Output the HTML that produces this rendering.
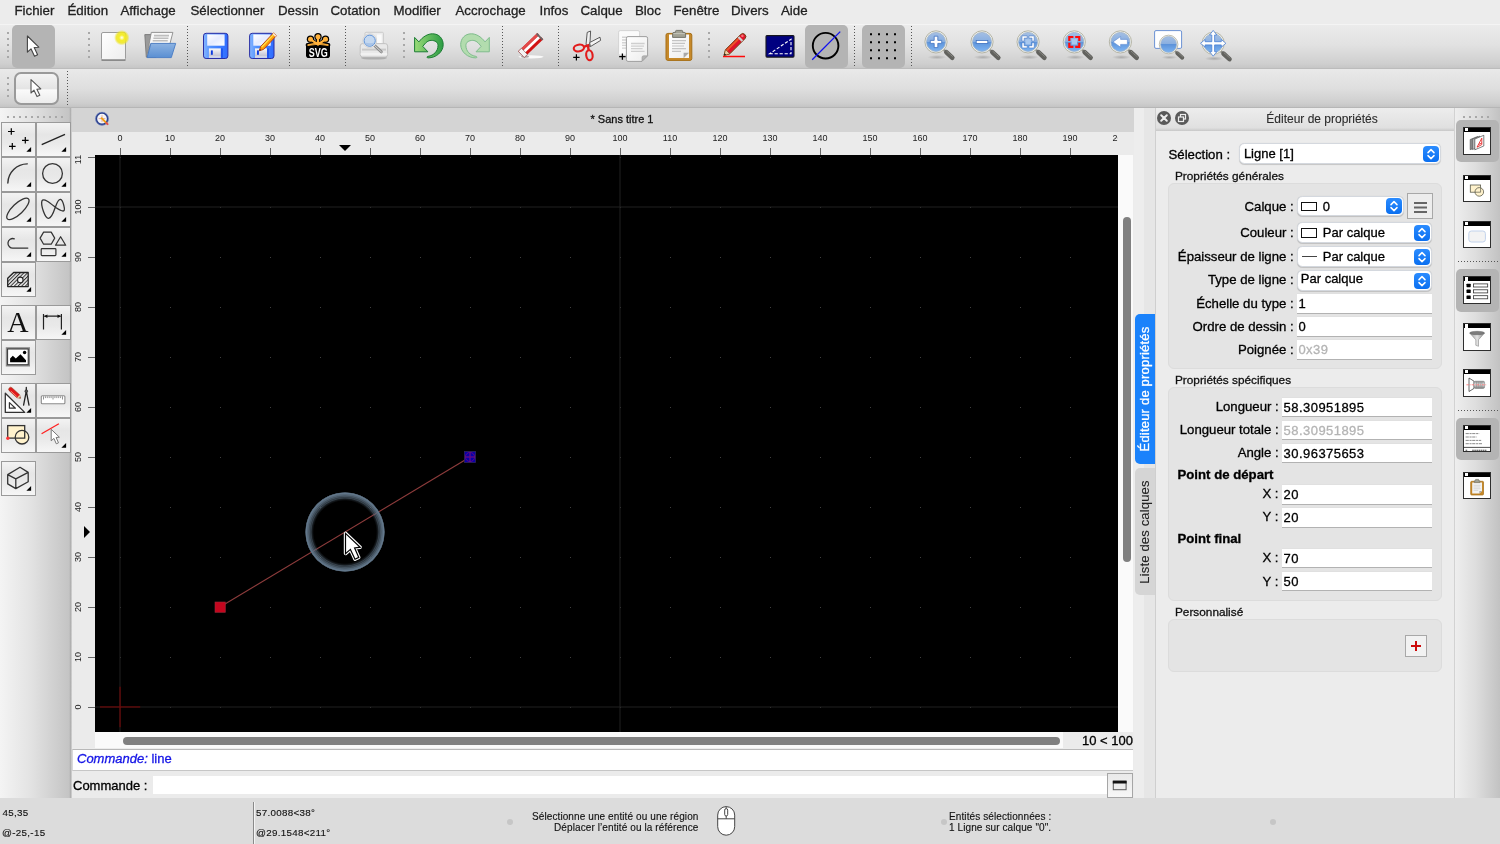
<!DOCTYPE html>
<html lang="fr">
<head>
<meta charset="utf-8">
<title>Sans titre 1</title>
<style>
*{box-sizing:border-box;margin:0;padding:0}
html,body{width:1500px;height:844px;overflow:hidden;background:#ececec}
body{position:relative;font-family:"Liberation Sans",sans-serif;font-size:13px;color:#1a1a1a;-webkit-font-smoothing:antialiased;-webkit-text-stroke:.3px}
.abs{position:absolute}
#app{position:absolute;left:0;top:0;width:1500px;height:844px;will-change:transform;overflow:hidden}
#menubar{position:absolute;left:0;top:0;width:1500px;height:24px;background:#ececec}
#menubar span{position:absolute;top:3px;font-size:13.3px;line-height:16px;color:#222;white-space:nowrap}
#tb1{position:absolute;left:0;top:24px;width:1500px;height:45px;background:linear-gradient(#ebebeb,#e2e2e2 45%,#cfcfcf 90%,#c6c6c6);border-top:1px solid #f4f4f4;border-bottom:1px solid #bcbcbc}
#tb2{position:absolute;left:0;top:69px;width:1500px;height:39px;background:linear-gradient(#e9e9e9,#dfdfdf 50%,#cecece 90%,#c4c4c4);border-bottom:1px solid #b6b6b6}
.hdl{position:absolute;width:2px;height:26px;background:repeating-linear-gradient(#a8a8a8 0 2px,transparent 2px 6px)}
.vsep{position:absolute;width:1px;height:42px;background:repeating-linear-gradient(#555 0 1px,transparent 1px 3px)}
.sel{position:absolute;background:#b4b4b4;border-radius:5px}
#leftp{position:absolute;left:0;top:108px;width:72px;height:690px;background:linear-gradient(90deg,#f4f4f4,#e4e4e4 40%,#c4c4c4 96%,#b0b0b0 98%,#d8d8d8)}
.tbn{position:absolute;width:35px;height:35px;border:1px solid #9a9a9a;background:linear-gradient(#f3f3f3,#e6e6e6 35%,#e9e9e9 60%,#f6f6f6)}
.tbn svg{position:absolute;left:-1px;top:-1px}
#tabbar{position:absolute;left:72px;top:108px;width:1062px;height:24px;background:#d4d4d4}
#hruler{position:absolute;left:72px;top:132px;width:1062px;height:23px;background:#ebebeb;overflow:hidden}
#vruler{position:absolute;left:72px;top:155px;width:23px;height:593px;background:#ebebeb;overflow:hidden}
#hruler span{position:absolute;top:1px;-webkit-text-stroke:0;font-size:9px;line-height:10px;width:30px;margin-left:-15px;text-align:center;color:#222}
#hruler i{position:absolute;top:16px;width:1px;height:7px;background:#666}
#vruler span{position:absolute;left:-8.800px;-webkit-text-stroke:0;font-size:9px;line-height:10px;width:30px;height:10px;margin-top:-5px;text-align:center;color:#222;transform:rotate(-90deg)}
#vruler i{position:absolute;left:16px;width:7px;height:1px;background:#666}
#canvas{position:absolute;left:95px;top:155px;width:1023px;height:577px;background:#000;overflow:hidden}
#vscroll{position:absolute;left:1118px;top:155px;width:15px;height:577px;background:#fafafa}
#hscroll{position:absolute;left:95px;top:732px;width:1038px;height:16px;background:#fafafa}
.thumb{position:absolute;background:#808080;border-radius:4px}
#hist{position:absolute;left:72px;top:748.6px;width:1061.3px;height:22.4px;background:#fff;border-top:1px solid #b8b8b8;border-bottom:1px solid #c6c6c6;border-left:1px solid #d8d8d8}
#cmdrow{position:absolute;left:72px;top:771px;width:1062px;height:27px;background:#ebebeb}
#status{position:absolute;left:0;top:798px;width:1500px;height:46px;background:#dcdcdc}
#status span{position:absolute;font-size:10px;line-height:11px;letter-spacing:.1px;-webkit-text-stroke:.12px;color:#111;white-space:nowrap}
#status span.co{font-size:9.8px;letter-spacing:.3px}
#dockstrip{position:absolute;left:1134px;top:108px;width:21px;height:690px;background:linear-gradient(90deg,#ededed 0 10px,#e6e6e6 10px)}
#prop{position:absolute;left:1155px;top:108px;width:300px;height:690px;background:#ececec;border-left:1px solid #cfcfcf;border-right:1px solid #d2d2d2}
#righttb{position:absolute;left:1455px;top:108px;width:45px;height:690px;background:linear-gradient(90deg,#eeeeee,#dedede 45%,#c2c2c2)}
.gb{position:absolute;left:1168px;width:274px;background:#e4e4e4;border:1px solid #dcdcdc;border-radius:6px}
.lbl{position:absolute;font-size:13.2px;line-height:16px;white-space:nowrap;color:#000}
.rl{text-align:right}
.inp{position:absolute;height:19.5px;background:#fff;border-bottom:1px solid #b2b2b2;box-shadow:0 -.5px 0 #dcdcdc;font-size:13px;line-height:18.5px;padding:1px 0 0 1.6px;letter-spacing:.45px;color:#000;white-space:nowrap}
.inp.dis{color:#b4b4b4}
.cmb{position:absolute;height:20.5px;background:#fff;border:1px solid #d4d8de;border-radius:5.5px;box-shadow:0 .5px .8px rgba(0,0,0,.16);font-size:13px;line-height:20px;color:#000;white-space:nowrap}
.cmb b{position:absolute;right:1.5px;top:1.5px;width:16px;height:16px;border-radius:4px;background:linear-gradient(#2b8cff,#0a6ff0)}
.cmb b svg{position:absolute;left:0;top:0}
.gt{position:absolute;left:1175px;font-size:11.8px;line-height:13px;color:#111;white-space:nowrap}
.dico{position:absolute;left:1463px;width:27.6px;height:27.4px;background:#fff;border:1px solid #2e2e2e}
.dico:before{content:"";position:absolute;left:0;top:0;width:25.6px;height:4px;background:#000}
.dico:after{content:"";position:absolute;left:.5px;top:0;width:3.3px;height:3.3px;background:#fff}
.hsep{position:absolute;left:1458px;width:42px;height:1px;background:repeating-linear-gradient(90deg,#555 0 1px,transparent 1px 3px)}
</style>
</head>
<body>
<div id="app">
<div id="menubar">
<span style="left:14.5px">Fichier</span>
<span style="left:67.5px">Édition</span>
<span style="left:120.5px">Affichage</span>
<span style="left:190.5px">Sélectionner</span>
<span style="left:278px">Dessin</span>
<span style="left:330.5px">Cotation</span>
<span style="left:393.5px">Modifier</span>
<span style="left:455.5px">Accrochage</span>
<span style="left:539.5px">Infos</span>
<span style="left:580.5px">Calque</span>
<span style="left:635px">Bloc</span>
<span style="left:673.5px">Fenêtre</span>
<span style="left:731px">Divers</span>
<span style="left:781px">Aide</span>
</div>
<div id="tb1">
<div class="hdl" style="left:7px;top:7px"></div>
<div class="sel" style="left:12px;top:0;width:43px;height:43px"></div>
<div class="hdl" style="left:88px;top:7px"></div>
<div class="vsep" style="left:187px;top:1px"></div>
<div class="vsep" style="left:289px;top:1px"></div>
<div class="vsep" style="left:345px;top:1px"></div>
<div class="hdl" style="left:403px;top:7px"></div>
<div class="vsep" style="left:502px;top:1px"></div>
<div class="vsep" style="left:558px;top:1px"></div>
<div class="hdl" style="left:708px;top:7px"></div>
<div class="sel" style="left:805px;top:0;width:43px;height:43px"></div>
<div class="vsep" style="left:854px;top:1px"></div>
<div class="sel" style="left:862px;top:0;width:43px;height:43px"></div>
<div class="vsep" style="left:911px;top:1px"></div>

</div>
<div id="tb2">
<div class="hdl" style="left:7px;top:8px;height:20px"></div>
<div class="abs" style="left:14px;top:3px;width:45px;height:33px;border:2px solid #9a9a9a;border-radius:7px;background:linear-gradient(#f4f4f4,#e4e4e4 50%,#fafafa 55%,#ececec)"></div>
<div class="vsep" style="left:67px;top:2px;height:34px"></div>

</div>
<svg class="abs" style="left:0;top:0" width="1500" height="108" viewBox="0 0 1500 108">
<defs>
<linearGradient id="gPaper" x1="0" y1="0" x2="1" y2="1"><stop offset="0" stop-color="#ffffff"/><stop offset="1" stop-color="#ededed"/></linearGradient>
<radialGradient id="gGlow"><stop offset="0" stop-color="#ffffff"/><stop offset=".35" stop-color="#f6ee2a"/><stop offset=".7" stop-color="#efe61e" stop-opacity=".85"/><stop offset="1" stop-color="#e8e030" stop-opacity="0"/></radialGradient>
<linearGradient id="gFold" x1="0" y1="0" x2="0" y2="1"><stop offset="0" stop-color="#8db3e2"/><stop offset="1" stop-color="#5a8fd2"/></linearGradient>
<linearGradient id="gFlop" x1="0" y1="0" x2="1" y2="0"><stop offset="0" stop-color="#86b6ff"/><stop offset=".3" stop-color="#4f90ff"/><stop offset="1" stop-color="#2f6cff"/></linearGradient>
<linearGradient id="gLab" x1="0" y1="0" x2="1" y2="1"><stop offset="0" stop-color="#ffffff"/><stop offset=".5" stop-color="#e6ecff"/><stop offset="1" stop-color="#ffffff"/></linearGradient>
<linearGradient id="gShut" x1="0" y1="0" x2="0" y2="1"><stop offset="0" stop-color="#fafafa"/><stop offset=".75" stop-color="#c6c6d6"/><stop offset="1" stop-color="#e8e8f0"/></linearGradient>
<linearGradient id="gUndo" x1="0" y1="0" x2="1" y2="0"><stop offset="0" stop-color="#9adb78"/><stop offset="1" stop-color="#2c9c44"/></linearGradient>
<linearGradient id="gRedo" x1="0" y1="0" x2="1" y2="0"><stop offset="0" stop-color="#86c494"/><stop offset="1" stop-color="#b4dca8"/></linearGradient>
<linearGradient id="gLens" x1="0" y1="0" x2="0" y2="1"><stop offset="0" stop-color="#a4bfe4"/><stop offset=".48" stop-color="#88aee0"/><stop offset=".5" stop-color="#5d93da"/><stop offset="1" stop-color="#7db4f2"/></linearGradient>
<radialGradient id="gShad"><stop offset="0" stop-color="#000" stop-opacity=".2"/><stop offset="1" stop-color="#000" stop-opacity="0"/></radialGradient>
<g id="lens"><ellipse cx="1" cy="15.300" rx="9.500" ry="2.200" fill="url(#gShad)"/><path d="M7.600 7.800L11 11" stroke="#8a8a84" stroke-width="2.400" stroke-linecap="round"/><path d="M10.400 10.400L16.300 15.800" stroke="#62625e" stroke-width="4.600" stroke-linecap="round"/><path d="M10.800 9.400L16.800 14.800" stroke="#8c8c86" stroke-width="1" stroke-linecap="round" stroke-dasharray="1 1"/><circle r="11.100" fill="#f3f3ec" stroke="#b4b4a6" stroke-width="1"/><circle r="9.500" fill="url(#gLens)" stroke="#9cb0c8" stroke-width=".8"/></g>
</defs>
<!-- arrow selected tb1 -->
<path d="M27.4 36L27.4 52.2L31 48.8L34.5 56.2L37.6 54.8L34.2 47.5L38.8 47.2Z" fill="#fff" stroke="#444" stroke-width="1.1" stroke-linejoin="round"/>
<!-- arrow tb2 -->
<path d="M31 79.7L31 93L34 90.2L37 96.6L39.8 95.3L36.9 89.2L40.8 88.9Z" fill="#fff" stroke="#555" stroke-width="1.1" stroke-linejoin="round"/>
<!-- new -->
<rect x="101.5" y="32.5" width="24" height="27.5" rx="1.5" fill="url(#gPaper)" stroke="#9c9c9c" stroke-width="1"/>
<path d="M101.5 60.2h24" stroke="#8a8a8a" stroke-width="1.6"/>
<circle cx="121.8" cy="37.7" r="7.8" fill="url(#gGlow)"/>
<!-- open -->
<path d="M144.8 34.6h7l1 2h3v20.5h-9.5z" fill="#9a9a9a" stroke="#777" stroke-width=".9"/>
<path d="M151.3 32.4h21.6l-3 11.5h-19.5l-3 9.5z" fill="#f8f8f8" stroke="#8a8a8a" stroke-width=".9"/>
<path d="M154 35.6h15M153.4 38.2h15M152.7 40.8h15" stroke="#bdbdbd" stroke-width="1.6"/>
<path d="M150.9 43.4h24.8l-4.4 14.2h-24.2z" fill="url(#gFold)" stroke="#467ac4" stroke-width=".9" stroke-linejoin="round"/>
<!-- save -->
<g id="flop"><rect x="203.5" y="33.3" width="24.4" height="25.2" rx="2.6" fill="url(#gFlop)" stroke="#2a2fa4" stroke-width="1"/>
<rect x="207.2" y="34.4" width="17.4" height="11.3" fill="url(#gLab)"/>
<rect x="208.9" y="48.4" width="12" height="9.4" fill="url(#gShut)"/><rect x="220.9" y="48.4" width="2" height="9.4" fill="#1f55f0"/>
<rect x="210.9" y="50.4" width="1.9" height="4.4" fill="#0c3ae0"/></g>
<use href="#flop" x="46.1"/>
<path d="M259.3 50.8l1.3-4.2L273.4 32.9l3 2.8L263.6 49.4z" fill="#ff9c08" stroke="#b23a12" stroke-width=".9" stroke-linejoin="round"/>
<path d="M261.6 47.2L274.4 33.6" stroke="#ffe24a" stroke-width="1.3"/>
<path d="M272.4 34l1-1.1 3 2.8-1 1.1z" fill="#fbe8e0"/><path d="M259.3 50.8l.6-1.9 1.2 1.2z" fill="#222"/>
<!-- svg logo -->
<g stroke="#000" stroke-width="4" stroke-linecap="round"><path d="M318 44.500V37.200M318 44.500L310.800 39.600M318 44.500L325.200 39.600M318 45L307.600 45M318 45L328.400 45"/></g>
<circle cx="318" cy="36.800" r="3.700" fill="#000"/><circle cx="310.500" cy="39.300" r="3.700" fill="#000"/><circle cx="325.500" cy="39.300" r="3.700" fill="#000"/>
<rect x="306" y="43" width="24" height="15" rx="2.800" fill="#000"/>
<g stroke="#ffb13b" stroke-width="2.200" stroke-linecap="round"><path d="M318 44V37.200M318 44.500L311 39.700M318 44.500L325 39.700"/></g>
<circle cx="318" cy="36.800" r="2.500" fill="#ffb13b"/><circle cx="310.500" cy="39.300" r="2.500" fill="#ffb13b"/><circle cx="325.500" cy="39.300" r="2.500" fill="#ffb13b"/>
<path d="M307.800 45.600q10.200-2.800 20.400 0l0-1q-10.200-3-20.400 0z" fill="#ffb13b" stroke="#ffb13b" stroke-width=".8"/>
<text x="318.300" y="57" text-anchor="middle" font-family="Liberation Sans, sans-serif" font-weight="bold" font-size="13" textLength="19" lengthAdjust="spacingAndGlyphs" fill="#fff" style="-webkit-text-stroke:0">SVG</text>
<!-- print preview -->
<ellipse cx="374" cy="58" rx="13" ry="1.6" fill="#000" opacity=".18"/>
<rect x="365" y="32.3" width="18.4" height="14" rx="1" fill="#ececec" stroke="#c4c4c4" stroke-width=".8"/>
<rect x="377" y="34.5" width="4.6" height="9" fill="#fafafa"/>
<path d="M362.6 43.6h22.6q2.4 0 2.4 2.4v8.6q0 2.4-2.4 2.4h-22.6q-2.4 0-2.4-2.4v-8.6q0-2.4 2.4-2.4z" fill="#e9e9e9" stroke="#bdbdbd" stroke-width=".9"/>
<path d="M362 49.6h24" stroke="#c9c9c9" stroke-width="2"/><path d="M360.6 54h26.6" stroke="#f6f6f6" stroke-width="1.2"/>
<path d="M374.4 45.4L381.4 51.9" stroke="#8c8c8c" stroke-width="2.8" stroke-linecap="round"/><path d="M374.4 45.4L381.4 51.9" stroke="#d8d8d8" stroke-width="1" stroke-linecap="round"/>
<circle cx="369.7" cy="40.7" r="6.9" fill="#f2f2f2" stroke="#c8c8c8" stroke-width=".7"/><circle cx="369.7" cy="40.7" r="5.6" fill="#c4d8f0" stroke="#5c90d6" stroke-width="1"/>
<path d="M365 42.5a5 5 0 0 0 9.4 0q-4.7 1.6-9.4 0z" fill="#a8c4e8"/>
<!-- undo -->
<path id="undo" d="M414.6 37.4L418.9 41.9C423 36.4 428 33.8 432.6 33.8C439 33.8 443.2 38.6 443.2 44.6C443.2 52 436 57.9 428.2 57.9C426.6 57.9 426.6 56.6 428 56.4C434 55.4 438 51 438 45.6C438 42 435 40.4 431.2 40.4C428 40.4 425.6 42.6 422.8 46.4L427.9 51.8L414.6 51.8Z" fill="url(#gUndo)" stroke="#1c7c34" stroke-width="1" stroke-linejoin="round"/>
<path d="M414.6 37.4L418.9 41.9C423 36.4 428 33.8 432.6 33.8C439 33.8 443.2 38.6 443.2 44.6C443.2 52 436 57.9 428.2 57.9C426.6 57.9 426.6 56.6 428 56.4C434 55.4 438 51 438 45.6C438 42 435 40.4 431.2 40.4C428 40.4 425.6 42.6 422.8 46.4L427.9 51.8L414.6 51.8Z" transform="translate(903.9,0) scale(-1,1)" fill="#b2dcae" stroke="#7fbc8c" stroke-width="1" stroke-linejoin="round"/>
<!-- eraser -->
<ellipse cx="531" cy="56.8" rx="12.5" ry="1.6" fill="#fff" opacity=".85"/><ellipse cx="525" cy="56.6" rx="4" ry="1.2" fill="#555" opacity=".5"/>
<g transform="translate(518.3,51.3) rotate(-43.9)"><rect x="0" y="0" width="26.4" height="8.6" fill="#d21212"/><rect x="0" y="0" width="26.4" height="2.6" fill="#e24a4a"/><rect x="3" y="2.9" width="23.4" height="2.8" fill="#fff"/><rect x="24.6" y="0" width="1.8" height="8.6" fill="#666"/><rect x="0" y="0" width="4.4" height="8.6" fill="#f4f4f4" stroke="#8a4a4a" stroke-width=".6"/></g>
<!-- scissors -->
<path d="M586 44.6L587.2 32.4L590.6 31L589.8 46.4Z" fill="#f0f0f0" stroke="#4a4a4a" stroke-width=".9" stroke-linejoin="round"/>
<path d="M589.6 42.6L600 37.2L600.6 40.4L590.4 46.6Z" fill="#f4f4f4" stroke="#4a4a4a" stroke-width=".9" stroke-linejoin="round"/>
<g fill="none" stroke="#e21c1c" stroke-width="2.1"><ellipse cx="578.9" cy="48" rx="5.2" ry="3.3" transform="rotate(-10 578.9 48)"/><ellipse cx="589.4" cy="55.2" rx="3.2" ry="5" transform="rotate(-8 589.4 55.2)"/><path d="M583.8 46.8L588 45.4L588.6 50.4" stroke-width="2.4"/></g>
<path d="M573.2 57.4h6.4M576.4 54.2v6.4" stroke="#000" stroke-width="1.2"/>
<!-- copy -->
<rect x="618.6" y="30.6" width="21" height="24.6" rx="1.6" fill="#fbfbfb" stroke="#d0d0d0" stroke-width=".9"/>
<path d="M622 37.2h5M622 40h5M622 42.7h5M622 45.4h5M622 48.1h5" stroke="#d4d4d4" stroke-width="1.4"/>
<path d="M628 36.6h18q1.6 0 1.6 1.6v17.6l-5.6 5.6h-14q-1.6 0-1.6-1.6v-21.6q0-1.6 1.6-1.6z" fill="url(#gPaper)" stroke="#9e9e9e" stroke-width="1"/>
<path d="M642 61.2v-3.8q0-1.6 1.6-1.6h3.8z" fill="#b4b4b4" stroke="#9a9a9a" stroke-width=".6"/>
<path d="M631 43.5h13.6M631 46.1h13M631 48.7h11.6M631 51.4h13.6" stroke="#cfcfcf" stroke-width="1.3"/>
<path d="M619.2 56.6h6.4M622.4 53.4v6.4" stroke="#000" stroke-width="1.3"/>
<!-- paste -->
<rect x="666" y="33.4" width="25.8" height="27" rx="1.8" fill="#c6892a" stroke="#a66e16" stroke-width="1"/>
<path d="M669 34.6h20v18l-5.4 5.4h-14.6z" fill="url(#gPaper)"/><path d="M669 58h14.6l5.4-5.400v5.400z" fill="#f4f4f4"/>
<path d="M683.6 58v-5.2h5.400z" fill="#a8a8a8"/>
<path d="M672 40.6h14M672 43.3h13M672 46h12M672 48.7h14M672 51.4h9" stroke="#c4c4c4" stroke-width="1.2"/>
<path d="M672.6 37.4v-3.600q0-1.400 1.400-1.400h1.600v-1.200q0-.8.800-.8h5.400q.8 0 .8.800v1.200h1.600q1.400 0 1.400 1.400v3.600z" fill="#a2a294" stroke="#6c6c62" stroke-width=".9"/>
<path d="M673.4 33.600h11.400" stroke="#c6c6ba" stroke-width="1"/>
<!-- pencil red -->
<path d="M723 56.500h22" stroke="#ff0a0a" stroke-width="1.500"/>
<g transform="translate(724,55.400) rotate(-45)"><path d="M0 0L5.200-3H26.600Q29.600-3 29.600 0T26.600 3H5.200Z" fill="#e0142a" stroke="#6e4416" stroke-width=".9" stroke-linejoin="round"/><path d="M5.200-2.400H22V-.600H5.200Z" fill="#ea5a28"/><path d="M0 0L5.200-3V3Z" fill="#f0cfa4" stroke="#6e4416" stroke-width=".6"/><path d="M0 0L1.900-1.100V1.100Z" fill="#111"/><rect x="22" y="-2.800" width="2.300" height="5.600" fill="#cfcfcf"/><circle cx="26.800" cy="-.800" r="1.300" fill="#ff8a8a" opacity=".8"/></g>
<!-- navy rect -->
<rect x="766" y="35.600" width="28" height="21.500" rx="1" fill="#000080" stroke="#16161e" stroke-width="1.100"/>
<path d="M769.600 53.800H791V39.200Z" fill="none" stroke="#fff" stroke-width="1.100" stroke-dasharray="3.200 1.800"/>
<!-- circle w/ blue line -->
<circle cx="825.600" cy="45.700" r="12.800" fill="none" stroke="#000" stroke-width="1.900"/>
<path d="M812.200 59.800L840.200 31.600" stroke="#1010f0" stroke-width="1.300"/>
<!-- grid dots -->
<g fill="#000"><path d="M870 33.200h2v2h-2zM878 33.200h2v2h-2zM886 33.200h2v2h-2zM894 33.200h2v2h-2zM870 41.200h2v2h-2zM878 41.200h2v2h-2zM886 41.200h2v2h-2zM894 41.200h2v2h-2zM870 49.200h2v2h-2zM878 49.200h2v2h-2zM886 49.200h2v2h-2zM894 49.200h2v2h-2zM870 57.200h2v2h-2zM878 57.200h2v2h-2zM886 57.200h2v2h-2zM894 57.200h2v2h-2z"/></g>
<!-- zoom icons -->
<use href="#lens" x="936" y="41.900"/><path d="M930.300 40.400h3.900v-4.200h3.600v4.200h3.900v3h-3.900v4.200h-3.600v-4.200h-3.900z" fill="#fff" stroke="#3c70c0" stroke-width=".8"/>
<use href="#lens" x="982" y="41.900"/><rect x="976.200" y="40.400" width="11.600" height="3" fill="#fff" stroke="#3c70c0" stroke-width=".8"/>
<use href="#lens" x="1028.100" y="41.900"/><rect x="1025.400" y="39.200" width="5.400" height="5.400" fill="#a9c8ee"/>
<path id="brk" d="M1022 35.900h5.200v2.200h-3v3h-2.200zM1034.200 35.900h-5.200v2.200h3v3h2.200zM1022 47.900h5.200v-2.200h-3v-3h-2.200zM1034.200 47.900h-5.200v-2.200h3v-3h2.200z" fill="#fff" stroke="#3c70c0" stroke-width=".5"/>
<use href="#lens" x="1074.300" y="41.900"/><rect x="1071.600" y="39.200" width="5.400" height="5.400" fill="#a9c8ee"/>
<path transform="translate(46.200,0)" d="M1022 35.900h5.200v2.200h-3v3h-2.200zM1034.200 35.900h-5.200v2.200h3v3h2.200zM1022 47.900h5.200v-2.200h-3v-3h-2.200zM1034.200 47.900h-5.200v-2.200h3v-3h2.200z" fill="#ff0a0a"/>
<use href="#lens" x="1120.400" y="41.900"/><path d="M1113 41.900l7.600-5.400v2.900h6.800v5h-6.800v2.900z" fill="#fff" stroke="#5a88d0" stroke-width=".6" stroke-linejoin="round"/>
<rect x="1154.600" y="30.600" width="27" height="17.800" rx="1.400" fill="#fff" stroke="#6c92d4" stroke-width="1"/>
<g transform="translate(1168.600,44.500) scale(.84)"><use href="#lens"/></g>
<use href="#lens" x="1213.200" y="43.300"/>
<path d="M1213.200 30.400l3.600 4.600h-2.200v6.700h6.700v-2.200l4.600 3.800l-4.600 3.800v-2.200h-6.700v6.700h2.200l-3.600 4.600l-3.600-4.600h2.200v-6.700h-6.700v2.200l-4.600-3.800l4.600-3.800v2.200h6.700v-6.700h-2.200z" fill="#fff" stroke="#4a80d4" stroke-width=".8" stroke-linejoin="round"/>
</svg>
<div id="leftp">
<div class="abs" style="left:7px;top:8px;width:58px;height:2px;background:repeating-linear-gradient(90deg,#a8a8a8 0 2px,transparent 2px 6px)"></div>
<div class="tbn m" style="left:1px;top:14px"><svg width="35" height="35" viewBox="0 0 35 35"><path d="M7 9.500h6.600M10.300 6.200v6.600M21 18.300h6.600M24.300 15v6.600M8 24.300h6.600M11.300 21v6.600" stroke="#000" stroke-width="1.200" fill="none"/></svg><svg width="35" height="35" viewBox="0 0 35 35"><path d="M25.400 29.800L30.100 25.100V29.800Z" fill="#000"/></svg></div>
<div class="tbn m" style="left:36px;top:14px"><svg width="35" height="35" viewBox="0 0 35 35"><path d="M5.700 22.700L29 12.300" stroke="#222" stroke-width="1.300" fill="none"/></svg><svg width="35" height="35" viewBox="0 0 35 35"><path d="M25.400 29.800L30.100 25.100V29.800Z" fill="#000"/></svg></div>
<div class="tbn m" style="left:1px;top:49px"><svg width="35" height="35" viewBox="0 0 35 35"><path d="M6.850 26A19.600 19.600 0 0 1 26.300 6.850" stroke="#333" stroke-width="1.400" fill="none" stroke-linecap="round"/></svg><svg width="35" height="35" viewBox="0 0 35 35"><path d="M25.400 29.800L30.100 25.100V29.800Z" fill="#000"/></svg></div>
<div class="tbn m" style="left:36px;top:49px"><svg width="35" height="35" viewBox="0 0 35 35"><circle cx="16.500" cy="16.500" r="9.900" stroke="#333" stroke-width="1.300" fill="none"/></svg><svg width="35" height="35" viewBox="0 0 35 35"><path d="M25.400 29.800L30.100 25.100V29.800Z" fill="#000"/></svg></div>
<div class="tbn m" style="left:1px;top:84px"><svg width="35" height="35" viewBox="0 0 35 35"><ellipse cx="16.900" cy="16.900" rx="14.500" ry="5.300" transform="rotate(-43.500 16.900 16.900)" stroke="#333" stroke-width="1.300" fill="none"/></svg><svg width="35" height="35" viewBox="0 0 35 35"><path d="M25.400 29.800L30.100 25.100V29.800Z" fill="#000"/></svg></div>
<div class="tbn m" style="left:36px;top:84px"><svg width="35" height="35" viewBox="0 0 35 35"><path d="M19.300 15.200C14 11 7.500 5.600 6 8.800C4.500 13 9 26.600 12.600 26.300C16 26 18 19 19.300 15.200C21 10.500 22.500 7 24.500 7.400C27 8 29.600 18.200 27.600 18.900C25.500 19.600 22 17 19.300 15.200" stroke="#333" stroke-width="1.300" fill="none"/></svg><svg width="35" height="35" viewBox="0 0 35 35"><path d="M25.400 29.800L30.100 25.100V29.800Z" fill="#000"/></svg></div>
<div class="tbn m" style="left:1px;top:119px"><svg width="35" height="35" viewBox="0 0 35 35"><path d="M13.300 11.800A4.800 4.800 0 1 0 12.400 21.100L26.800 21.100" stroke="#333" stroke-width="1.300" fill="none" stroke-linecap="round"/></svg><svg width="35" height="35" viewBox="0 0 35 35"><path d="M25.400 29.800L30.100 25.100V29.800Z" fill="#000"/></svg></div>
<div class="tbn m" style="left:36px;top:119px"><svg width="35" height="35" viewBox="0 0 35 35"><g stroke="#333" stroke-width="1.200" fill="none" stroke-linejoin="round"><path d="M4.100 11.100L7.600 5.100H15.200L18.700 11.100L15.200 17.200H7.600Z"/><path d="M24.600 9.700L29.700 18.200H19.500Z"/><rect x="5.200" y="21.600" width="14.700" height="7" rx=".8"/></g></svg><svg width="35" height="35" viewBox="0 0 35 35"><path d="M25.400 29.800L30.100 25.100V29.800Z" fill="#000"/></svg></div>
<div class="tbn m" style="left:1px;top:154px"><svg width="35" height="35" viewBox="0 0 35 35"><defs><pattern id="ht" width="2.600" height="2.600" patternUnits="userSpaceOnUse" patternTransform="rotate(-45)"><rect width="2.600" height="1" fill="#333"/></pattern><clipPath id="hc"><path d="M12.650 10.500H27.200V24.600H6.700V16.200Z"/></clipPath></defs><path d="M12.650 10.500H27.200V24.600H6.700V16.200Z" fill="url(#ht)" stroke="#222" stroke-width="1.300" stroke-linejoin="round"/><circle cx="19.300" cy="17.900" r="2.800" fill="#efefef" stroke="#222" stroke-width="1.100"/></svg><svg width="35" height="35" viewBox="0 0 35 35"><path d="M25.400 29.800L30.100 25.100V29.800Z" fill="#000"/></svg></div>
<div class="tbn" style="left:1px;top:197px"><svg width="35" height="35" viewBox="0 0 35 35"><text x="17" y="26.800" text-anchor="middle" font-family="Liberation Serif, serif" font-size="29.500" fill="#111">A</text></svg></div>
<div class="tbn m" style="left:36px;top:197px"><svg width="35" height="35" viewBox="0 0 35 35"><g stroke="#222" stroke-width="1.200" fill="none"><path d="M7.500 9.100V24.600M25.400 9.100V24.600M8.500 11.200H24.400"/></g><path d="M7.900 11.200L11.400 9.400V13ZM25 11.200L21.500 9.400V13Z" fill="#111"/></svg><svg width="35" height="35" viewBox="0 0 35 35"><path d="M25.400 29.800L30.100 25.100V29.800Z" fill="#000"/></svg></div>
<div class="tbn" style="left:1px;top:232px"><svg width="35" height="35" viewBox="0 0 35 35"><rect x="5.800" y="8.200" width="22.200" height="17.300" fill="#fff" stroke="#8a8a8a" stroke-width="2"/><rect x="6.600" y="9" width="20.600" height="15.700" fill="#fff" stroke="#333" stroke-width="1"/><path d="M9.100 22.300V18.400L11.800 15.700L14.800 18.500L19.500 14.200L25 20.200V22.300Z" fill="#000"/><circle cx="23.600" cy="12.500" r="1.700" fill="#000"/></svg></div>
<div class="tbn m" style="left:1px;top:275px"><svg width="35" height="35" viewBox="0 0 35 35"><path d="M4.300 10.200V29.400H23.700Z" fill="#fff" stroke="#333" stroke-width="1.300" stroke-linejoin="round"/><path d="M8.400 19.600V25.200H14.400Z" fill="none" stroke="#333" stroke-width="1.200" stroke-linejoin="round"/><g transform="translate(19.500,15.300) rotate(-137.500)"><path d="M0 0L3-2H13.500Q15.300-2 15.300 0T13.500 2H3Z" fill="#e0181c" stroke="#8a3a10" stroke-width=".5"/><path d="M0 0L3-2V2Z" fill="#e8c49a"/><path d="M0 0L1.200-.8V.8Z" fill="#333"/><path d="M4 -1.200H12" stroke="#ff8a70" stroke-width=".8"/></g><g stroke="#222" stroke-width="1.300" fill="none" stroke-linecap="round"><path d="M25.300 8.200L22.600 22.200M25.300 8.200L28 22.200M25.300 4.500V8"/></g><circle cx="25.300" cy="8.200" r="1.400" fill="#555" stroke="#222" stroke-width=".6"/></svg><svg width="35" height="35" viewBox="0 0 35 35"><path d="M25.400 29.800L30.100 25.100V29.800Z" fill="#000"/></svg></div>
<div class="tbn" style="left:36px;top:275px"><svg width="35" height="35" viewBox="0 0 35 35"><rect x="5.300" y="12.800" width="23.600" height="8" rx="1" fill="#fff" stroke="#8c8c8c" stroke-width="1.100"/><path d="M7.500 13.300v3.200M9.400 13.300v1.800M11.300 13.300v1.800M13.200 13.300v1.800M15.100 13.300v1.800M17 13.300v3.200M18.900 13.300v1.800M20.800 13.300v1.800M22.700 13.300v1.800M24.600 13.300v1.800M26.500 13.300v3.200" stroke="#777" stroke-width=".8"/></svg></div>
<div class="tbn" style="left:1px;top:310px"><svg width="35" height="35" viewBox="0 0 35 35"><rect x="6.700" y="7.600" width="17" height="12.500" fill="#fff2cc" stroke="#333" stroke-width="1.300"/><circle cx="21" cy="19.200" r="6.800" fill="#fff2cc" stroke="#333" stroke-width="1.300"/><path d="M23.700 13V20.100H14.300" fill="none" stroke="#333" stroke-width="1.300"/><circle cx="6.850" cy="20.200" r="1.700" fill="#ff3434"/></svg></div>
<div class="tbn m" style="left:36px;top:310px"><svg width="35" height="35" viewBox="0 0 35 35"><path d="M5.600 15.800L22.900 5.700" stroke="#ff2020" stroke-width="1.300"/><path d="M15.200 11.300V22.800L17.900 20.400L20.300 25.800L22.500 24.800L20.100 19.500L23.400 19.200Z" fill="#fff" stroke="#777" stroke-width="1" stroke-linejoin="round"/></svg><svg width="35" height="35" viewBox="0 0 35 35"><path d="M25.400 29.800L30.100 25.100V29.800Z" fill="#000"/></svg></div>
<div class="tbn m" style="left:1px;top:353px"><svg width="35" height="35" viewBox="0 0 35 35"><g stroke="#333" stroke-width="1.300" fill="none" stroke-linejoin="round"><path d="M19 6.300L27.200 11.400L14.800 17.800L6.700 13.600ZM6.700 13.600V22.900L14.800 27.600L27.200 20.800V11.400M14.800 17.800V27.600"/></g></svg><svg width="35" height="35" viewBox="0 0 35 35"><path d="M25.400 29.800L30.100 25.100V29.800Z" fill="#000"/></svg></div>
</div>
<div id="tabbar"><svg class="abs" style="left:22px;top:3px" width="18" height="18" viewBox="94 111 18 18"><circle cx="102" cy="118.700" r="5.800" fill="#f4f4f4" stroke="#2a3f8c" stroke-width="1.900"/><circle cx="102" cy="118.700" r="6.600" fill="none" stroke="#8a9cd0" stroke-width=".7" opacity=".8"/><path d="M98.600 118.600h6.800M102 115.200v6.800" stroke="#d89090" stroke-width=".7"/><path d="M101.600 118.200L107 123.600" stroke="#f2a010" stroke-width="1.900" stroke-linecap="round"/><path d="M106.400 123L107.600 124.200" stroke="#e05050" stroke-width="1.900" stroke-linecap="round"/></svg><span class="abs" style="left:0;top:5px;width:1100px;text-align:center;font-size:11px;line-height:13px;color:#111">* Sans titre 1</span></div>
<div id="hruler"><div class="abs" style="left:0;top:0;width:1046px;height:23px;overflow:hidden">
<span style="left:48px">0</span><i style="left:48px"></i>
<span style="left:98px">10</span><i style="left:98px"></i>
<span style="left:148px">20</span><i style="left:148px"></i>
<span style="left:198px">30</span><i style="left:198px"></i>
<span style="left:248px">40</span><i style="left:248px"></i>
<span style="left:298px">50</span><i style="left:298px"></i>
<span style="left:348px">60</span><i style="left:348px"></i>
<span style="left:398px">70</span><i style="left:398px"></i>
<span style="left:448px">80</span><i style="left:448px"></i>
<span style="left:498px">90</span><i style="left:498px"></i>
<span style="left:548px">100</span><i style="left:548px"></i>
<span style="left:598px">110</span><i style="left:598px"></i>
<span style="left:648px">120</span><i style="left:648px"></i>
<span style="left:698px">130</span><i style="left:698px"></i>
<span style="left:748px">140</span><i style="left:748px"></i>
<span style="left:798px">150</span><i style="left:798px"></i>
<span style="left:848px">160</span><i style="left:848px"></i>
<span style="left:898px">170</span><i style="left:898px"></i>
<span style="left:948px">180</span><i style="left:948px"></i>
<span style="left:998px">190</span><i style="left:998px"></i>
<span style="left:1048px">200</span><i style="left:1048px"></i>
<div class="abs" style="left:267.400px;top:13px;border-style:solid;border-width:6px 6px 0 6px;border-color:#000 transparent transparent transparent"></div>
</div></div>
<div id="vruler">
<span style="top:552px">0</span><i style="top:552px"></i>
<span style="top:502px">10</span><i style="top:502px"></i>
<span style="top:452px">20</span><i style="top:452px"></i>
<span style="top:402px">30</span><i style="top:402px"></i>
<span style="top:352px">40</span><i style="top:352px"></i>
<span style="top:302px">50</span><i style="top:302px"></i>
<span style="top:252px">60</span><i style="top:252px"></i>
<span style="top:202px">70</span><i style="top:202px"></i>
<span style="top:152px">80</span><i style="top:152px"></i>
<span style="top:102px">90</span><i style="top:102px"></i>
<span style="top:52px">100</span><i style="top:52px"></i>
<span style="top:2px">110</span><i style="top:2px"></i>
<div class="abs" style="left:12px;top:371px;border-style:solid;border-width:6px 0 6px 6px;border-color:transparent transparent transparent #000"></div>
</div>

<div id="vscroll"><div class="thumb" style="left:5px;top:62px;width:8px;height:345px"></div></div>
<div id="hscroll"><div class="thumb" style="left:28px;top:5px;width:937px;height:8px"></div><span class="abs" style="left:968px;top:0;width:70px;height:16px;background:#ebebeb;font-size:13px;line-height:16px;padding-top:1px;text-align:right;color:#000">10 &lt; 100</span></div>
<div id="hist"><span class="abs" style="left:4px;top:1px;font-size:13px;line-height:16px;color:#1414e6"><em>Commande:</em> line</span></div>
<div id="cmdrow"><span class="abs" style="left:1px;top:7px;font-size:13px;line-height:16px;color:#000">Commande :</span><div class="abs" style="left:81px;top:4.600px;width:954.300px;height:18.300px;background:#fff"></div><div class="abs" style="left:1035.4px;top:1.600px;width:25.400px;height:25px;border:1px solid #a6a6a6;background:linear-gradient(#e9e9e9,#f7f7f7)"><svg class="abs" style="left:-1px;top:-1px" width="26" height="26" viewBox="1107.400 772.600 26 26"><rect x="1113.700" y="781" width="12.800" height="8.300" fill="#ececec" stroke="#5a5a5a" stroke-width="1"/><rect x="1113.200" y="780.200" width="13.800" height="2.900" fill="#111"/></svg></div></div>
<div id="canvas"><svg width="1023" height="577" viewBox="95 155 1023 577" shape-rendering="auto">
<defs><pattern id="gd" x="120" y="157" width="50" height="50" patternUnits="userSpaceOnUse"><rect x="0" y="0" width="1" height="1" fill="#404040"/></pattern><radialGradient id="ring" cx="50%" cy="50%" r="50%"><stop offset="0.78" stop-color="#56697a" stop-opacity="0"/><stop offset="0.85" stop-color="#4e6070" stop-opacity=".45"/><stop offset="0.92" stop-color="#56697a" stop-opacity=".85"/><stop offset="0.97" stop-color="#61768a" stop-opacity="1"/><stop offset="0.99" stop-color="#56697a" stop-opacity=".8"/><stop offset="1" stop-color="#56697a" stop-opacity="0"/></radialGradient></defs>
<rect x="95" y="155" width="1023" height="577" fill="url(#gd)"/>
<rect x="119.5" y="155" width="1" height="577" fill="#202020"/>
<rect x="619.5" y="155" width="1" height="577" fill="#202020"/>
<rect x="95" y="206.5" width="1023" height="1" fill="#202020"/>
<rect x="95" y="706.5" width="1023" height="1" fill="#202020"/>
<rect x="100" y="706.4" width="40.2" height="1.1" fill="#720606"/><rect x="119.500" y="686.700" width="1.100" height="40.500" fill="#720606"/>
<line x1="220" y1="607" x2="470" y2="457" stroke="#8e3c3c" stroke-width="1.15"/>
<circle cx="345" cy="532" r="40" fill="url(#ring)"/><g fill="none" stroke="#7d93a6" stroke-width=".5" opacity=".45"><circle cx="345" cy="532" r="34"/><circle cx="345" cy="532" r="35.5"/><circle cx="345" cy="532" r="37"/><circle cx="345" cy="532" r="38.400"/></g>
<rect x="215" y="602" width="10.300" height="10.300" fill="#c4061e" stroke="#9a2a3a" stroke-width=".6"/>
<rect x="464.5" y="451.5" width="11" height="11" fill="#0800a8" stroke="#32245e" stroke-width=".8"/><circle cx="470" cy="457" r="4.6" fill="none" stroke="#640a7c" stroke-width="1"/><path d="M470 452.5v9M465.5 457h9" stroke="#5c0a86" stroke-width="1.4"/>
<path d="M345.5 533.3L345.5 553.6L350.4 549.4L355 559.2L358.8 557.4L354.6 547.9L360.2 547.2Z" fill="#fff" stroke="#fff" stroke-width="3.4" stroke-linejoin="round"/><path d="M345.5 533.3L345.5 553.6L350.4 549.4L355 559.2L358.8 557.4L354.6 547.9L360.2 547.2Z" fill="#fff" stroke="#000" stroke-width="1.2" stroke-linejoin="miter"/>
</svg></div>
<div id="dockstrip">
<div class="abs" style="left:1px;top:206px;width:20px;height:150px;background:#1a82fb;border-radius:5px 0 0 5px"><span class="abs" style="left:-55px;top:67px;width:130px;height:16px;line-height:16px;font-size:13px;letter-spacing:.2px;color:#fff;text-align:center;white-space:nowrap;transform:rotate(-90deg)">Éditeur de propriétés</span></div>
<div class="abs" style="left:1px;top:360px;width:20px;height:127px;background:#d5d5d5;border-radius:5px 0 0 5px"><span class="abs" style="left:-55px;top:56px;width:130px;height:16px;line-height:16px;font-size:13px;letter-spacing:.17px;-webkit-text-stroke:.1px;color:#222;text-align:center;white-space:nowrap;transform:rotate(-90deg)">Liste des calques</span></div>
</div>
<div id="prop">
<div class="abs" style="left:0;top:0;width:298px;height:22.700px;background:linear-gradient(#ededed,#e0e0e0 86%,#c8c8c8)"></div>
<svg class="abs" style="left:0;top:2px" width="36" height="18" viewBox="1156 110 36 18"><circle cx="1164" cy="118" r="7" fill="#5a5a5a"/><path d="M1161.200 115.200l5.600 5.600M1166.800 115.200l-5.600 5.600" stroke="#eee" stroke-width="2" stroke-linecap="round"/><circle cx="1182" cy="118" r="7" fill="#5a5a5a"/><rect x="1180.500" y="114.500" width="5" height="4.500" fill="none" stroke="#eee" stroke-width="1.2"/><rect x="1178.500" y="117" width="5" height="4.500" fill="#5a5a5a" stroke="#eee" stroke-width="1.2"/></svg>
<span class="abs" style="left:66px;top:4px;width:200px;text-align:center;font-size:12px;line-height:14px;color:#2c2c2c;-webkit-text-stroke:.1px">Éditeur de propriétés</span>
</div>
<span class="lbl" style="top:147px;left:1168.5px;">Sélection :</span>
<div class="cmb" style="left:1238.9px;top:143.4px;width:202.6px;height:20.5px"><span style="margin-left:4px">Ligne [1]</span><b><svg width="16" height="16" viewBox="0 0 16 16"><path d="M5 6.6L8 3.6L11 6.6M5 9.6L8 12.6L11 9.6" fill="none" stroke="#fff" stroke-width="1.5" stroke-linecap="round" stroke-linejoin="round"/></svg></b></div>
<span class="gt" style="top:170px">Propriétés générales</span>
<div class="gb" style="top:183px;height:186px"></div>
<span class="lbl" style="top:199px;right:206.29999999999995px;">Calque :</span>
<div class="cmb" style="left:1296.8px;top:195.8px;width:107.3px;height:20.5px"><i class="abs" style="left:3.5px;top:5px;width:16px;height:9.5px;border:1px solid #111;background:#fff"></i><span style="margin-left:25px">0</span><b><svg width="16" height="16" viewBox="0 0 16 16"><path d="M5 6.6L8 3.6L11 6.6M5 9.6L8 12.6L11 9.6" fill="none" stroke="#fff" stroke-width="1.5" stroke-linecap="round" stroke-linejoin="round"/></svg></b></div>
<div class="abs" style="left:1407px;top:193px;width:26px;height:26px;border:1px solid #a8a8a8;background:#ededed"><i class="abs" style="left:6px;top:8px;width:13px;height:1.5px;background:#666;box-shadow:0 4.5px 0 #666,0 9px 0 #666"></i></div>
<span class="lbl" style="top:225px;right:206.29999999999995px;">Couleur :</span>
<div class="cmb" style="left:1296.8px;top:222px;width:135.5px;height:20.5px"><i class="abs" style="left:3.5px;top:5px;width:16px;height:9.5px;border:1px solid #111;background:#fff"></i><span style="margin-left:25px">Par calque</span><b><svg width="16" height="16" viewBox="0 0 16 16"><path d="M5 6.6L8 3.6L11 6.6M5 9.6L8 12.6L11 9.6" fill="none" stroke="#fff" stroke-width="1.5" stroke-linecap="round" stroke-linejoin="round"/></svg></b></div>
<span class="lbl" style="top:249px;right:206.29999999999995px;">Épaisseur de ligne :</span>
<div class="cmb" style="left:1296.8px;top:246px;width:135.5px;height:20.5px"><i class="abs" style="left:4px;top:9px;width:15px;height:1px;background:#444"></i><span style="margin-left:25px">Par calque</span><b><svg width="16" height="16" viewBox="0 0 16 16"><path d="M5 6.6L8 3.6L11 6.6M5 9.6L8 12.6L11 9.6" fill="none" stroke="#fff" stroke-width="1.5" stroke-linecap="round" stroke-linejoin="round"/></svg></b></div>
<span class="lbl" style="top:272px;right:206.29999999999995px;">Type de ligne :</span>
<div class="cmb" style="left:1296.8px;top:270px;width:135.5px;height:20.5px"><span style="margin-left:3px;position:relative;top:-1.7px">Par calque</span><b><svg width="16" height="16" viewBox="0 0 16 16"><path d="M5 6.6L8 3.6L11 6.6M5 9.6L8 12.6L11 9.6" fill="none" stroke="#fff" stroke-width="1.5" stroke-linecap="round" stroke-linejoin="round"/></svg></b></div>
<span class="lbl" style="top:296px;right:206.29999999999995px;">Échelle du type :</span>
<div class="inp" style="left:1296.8px;top:294.1px;width:135.5px">1</div>
<span class="lbl" style="top:319px;right:206.29999999999995px;">Ordre de dessin :</span>
<div class="inp" style="left:1296.8px;top:317.3px;width:135.5px">0</div>
<span class="lbl" style="top:342px;right:206.29999999999995px;">Poignée :</span>
<div class="inp dis" style="left:1296.8px;top:340.3px;width:135.5px">0x39</div>
<span class="gt" style="top:374px">Propriétés spécifiques</span>
<div class="gb" style="top:387px;height:214px"></div>
<span class="lbl" style="top:399px;right:221.29999999999995px;">Longueur :</span>
<div class="inp" style="left:1282px;top:397.8px;width:150.3px">58.30951895</div>
<span class="lbl" style="top:422px;right:221.29999999999995px;">Longueur totale :</span>
<div class="inp dis" style="left:1282px;top:420.8px;width:150.3px">58.30951895</div>
<span class="lbl" style="top:445px;right:221.29999999999995px;">Angle :</span>
<div class="inp" style="left:1282px;top:443.8px;width:150.3px">30.96375653</div>
<span class="lbl" style="top:467px;left:1177.5px;font-weight:bold;">Point de départ</span>
<span class="lbl" style="top:486px;right:221.5px;">X :</span>
<div class="inp" style="left:1282px;top:485px;width:150.3px">20</div>
<span class="lbl" style="top:509px;right:221.5px;">Y :</span>
<div class="inp" style="left:1282px;top:508px;width:150.3px">20</div>
<span class="lbl" style="top:531px;left:1177.5px;font-weight:bold;">Point final</span>
<span class="lbl" style="top:550px;right:221.5px;">X :</span>
<div class="inp" style="left:1282px;top:548.6px;width:150.3px">70</div>
<span class="lbl" style="top:574px;right:221.5px;">Y :</span>
<div class="inp" style="left:1282px;top:571.8px;width:150.3px">50</div>
<span class="gt" style="top:606px">Personnalisé</span>
<div class="gb" style="top:619px;height:53px"></div>
<div class="abs" style="left:1405px;top:635px;width:22px;height:22px;border:1px solid #a8a8a8;background:#f2f2f2"><i class="abs" style="left:5px;top:9px;width:10px;height:2px;background:#cc0a0a"></i><i class="abs" style="left:9px;top:5px;width:2px;height:10px;background:#cc0a0a"></i></div>
<div id="righttb"><div class="abs" style="left:8px;top:8px;width:26px;height:2px;background:repeating-linear-gradient(90deg,#a8a8a8 0 2px,transparent 2px 6px)"></div></div>
<div class="sel" style="left:1456.3px;top:120px;width:42.4px;height:42.4px;border-radius:5px"></div>
<div class="sel" style="left:1456.3px;top:269.3px;width:42.4px;height:42.4px;border-radius:5px"></div>
<div class="sel" style="left:1456.3px;top:418px;width:42.4px;height:42.4px;border-radius:5px"></div>
<div class="hsep" style="top:261px"></div>
<div class="hsep" style="top:410px"></div>
<div class="dico" style="top:127.2px"><svg class="abs" style="left:-1px;top:-1px" width="28" height="28" viewBox="0 0 28 28"><path d="M7.200 12.500L14.600 9.500V19.600L7.200 22.700Z" fill="#8e8e8e" stroke="#4a4a4a" stroke-width=".6"/><path d="M9.400 12.200L16.800 9.100V19.400L9.400 22.600Z" fill="#b8b8b8" stroke="#4a4a4a" stroke-width=".6"/><path d="M11.800 12L20.800 8.300V19L11.800 22.800Z" fill="#fff" stroke="#4a4a4a" stroke-width=".7"/><path d="M14 20.200L18.800 11.200V17.600ZM15.800 17.400L18.800 16" fill="none" stroke="#e62828" stroke-width=".9" stroke-linejoin="round"/></svg></div>
<div class="dico" style="top:174.5px"><svg class="abs" style="left:-1px;top:-1px" width="28" height="28" viewBox="0 0 28 28"><rect x="7.300" y="10" width="10.300" height="7.200" fill="#fff2cc" stroke="#5a5a4a" stroke-width=".8"/><circle cx="16.300" cy="16.900" r="4.300" fill="#fff2cc" stroke="#5a5a4a" stroke-width=".8"/><path d="M17.600 12.800V17.200H12" fill="none" stroke="#5a5a4a" stroke-width=".7"/></svg></div>
<div class="dico" style="top:220.6px"><svg class="abs" style="left:-1px;top:-1px" width="28" height="28" viewBox="0 0 28 28"><rect x="5.800" y="10" width="16.600" height="11" rx="2.600" fill="#f3f3f3" stroke="#c2d3ec" stroke-width="1"/></svg></div>
<div class="dico" style="top:276.3px"><svg class="abs" style="left:-1px;top:-1px" width="28" height="28" viewBox="0 0 28 28"><g fill="#000"><rect x="3.500" y="7.700" width="4.200" height="3.500" rx=".6"/><rect x="3.500" y="13.600" width="4.200" height="3.500" rx=".6"/><rect x="3.500" y="19.500" width="4.200" height="3.500" rx=".6"/></g><g fill="#fff" stroke="#333" stroke-width=".8"><rect x="10.500" y="7.900" width="14.200" height="3.100"/><rect x="10.500" y="13.800" width="14.200" height="3.100"/><rect x="10.500" y="19.700" width="14.200" height="3.100"/></g></svg></div>
<div class="dico" style="top:323.3px"><svg class="abs" style="left:-1px;top:-1px" width="28" height="28" viewBox="0 0 28 28"><defs><linearGradient id="fg" x1="0" y1="0" x2="1" y2="0"><stop offset="0" stop-color="#9a9a9a"/><stop offset=".5" stop-color="#e4e4e4"/><stop offset="1" stop-color="#8a8a8a"/></linearGradient></defs><path d="M6.700 10L12.800 16.800V22.300L15.500 23.300V16.800L21.500 10Z" fill="url(#fg)" stroke="#777" stroke-width=".5"/><ellipse cx="14.100" cy="10" rx="7.400" ry="1.700" fill="#7c7c7c" stroke="#666" stroke-width=".5"/></svg></div>
<div class="dico" style="top:369.2px"><svg class="abs" style="left:-1px;top:-1px" width="28" height="28" viewBox="0 0 28 28"><defs><linearGradient id="sg" x1="0" y1="0" x2="0" y2="1"><stop offset="0" stop-color="#8a8a8a"/><stop offset=".45" stop-color="#e8e8e8"/><stop offset="1" stop-color="#7a7a7a"/></linearGradient></defs><path d="M6 9L11 12.200V19.400L6 22.500Z" fill="#fff" stroke="#444" stroke-width=".8" stroke-linejoin="round"/><rect x="11" y="12.200" width="10.600" height="7.200" rx="1.400" fill="url(#sg)" stroke="#777" stroke-width=".5"/><path d="M13.500 12.400v6.800M15.300 12.400v6.800M17.100 12.400v6.800M18.900 12.400v6.800" stroke="#8a8a8a" stroke-width=".6"/><path d="M3.400 15.800H24.200" stroke="#ff6a6a" stroke-width=".8" stroke-dasharray="2.400 1 .8 1"/></svg></div>
<div class="dico" style="top:425.1px"><svg class="abs" style="left:-1px;top:-1px" width="28" height="28" viewBox="0 0 28 28"><path d="M2.600 8.600h13.600M2.600 12h11M2.600 15.400h15.600M2.600 18.700h16.800" stroke="#8a8a8a" stroke-width="1" stroke-dasharray="3.200 .7 2.100 .6"/><path d="M.5 22.400H27.500" stroke="#222" stroke-width=".8"/><path d="M2.600 25.200h2M9.200 25.200h14.600" stroke="#444" stroke-width="1.100" stroke-dasharray="1.600 .5"/></svg></div>
<div class="dico" style="top:472px"><svg class="abs" style="left:-1px;top:-1px" width="28" height="28" viewBox="0 0 28 28"><rect x="7.700" y="9.300" width="12.800" height="13.700" rx="1" fill="#c6892a" stroke="#a66e16" stroke-width=".7"/><path d="M9.200 10.400h9.800v8.600l-2.600 2.600h-7.200z" fill="#f2f2f2"/><path d="M16.400 21.600v-2.600h2.600z" fill="#a8a8a8"/><path d="M10.600 13.300h7M10.600 15h6.400M10.600 16.700h7M10.600 18.400h4.600" stroke="#cfcfcf" stroke-width=".7"/><path d="M11.300 10.600v-1.800h1.300v-1.400h3v1.400h1.300v1.800z" fill="#a2a294" stroke="#6c6c62" stroke-width=".6"/></svg></div>
<div id="status">
<span class="co" style="left:2.5px;top:9px">45,35</span><span class="co" style="left:2px;top:29px">@-25,-15</span>
<div class="abs" style="left:253px;top:4px;width:1px;height:42px;background:#8a8a8a"></div><div class="abs" style="left:254px;top:4px;width:1px;height:42px;background:#f4f4f4"></div>
<span class="co" style="left:256px;top:9px">57.0088&lt;38°</span><span class="co" style="left:256px;top:29px">@29.1548&lt;211°</span>
<div class="abs" style="left:506.5px;top:21px;width:6px;height:6px;border-radius:3px;background:#c6c6c6"></div>
<div class="abs" style="left:940.5px;top:21px;width:6px;height:6px;border-radius:3px;background:#c6c6c6"></div>
<div class="abs" style="left:1269.5px;top:21px;width:6px;height:6px;border-radius:3px;background:#c6c6c6"></div>
<span style="right:801.5px;top:13px;text-align:right">Sélectionne une entité ou une région</span><span style="right:801.5px;top:24px;text-align:right">Déplacer l’entité ou la référence</span>
<svg class="abs" style="left:716px;top:7px" width="20" height="32" viewBox="716 805 20 32"><rect x="717.7" y="806.6" width="17" height="28.6" rx="8.5" ry="8.5" fill="#fff" stroke="#444" stroke-width="1"/><path d="M717.7 818.8h17" stroke="#444" stroke-width="1" fill="none"/><path d="M726.2 806.6v2M726.2 816v2.800" stroke="#444" stroke-width="1"/><rect x="724.7" y="808.6" width="3" height="7.400" rx="1.500" fill="#fff" stroke="#444" stroke-width="1"/></svg>
<span style="left:949px;top:13px">Entités sélectionnées :</span><span style="left:949px;top:24px">1 Ligne sur calque "0".</span>
</div>
</div>
</body>
</html>
